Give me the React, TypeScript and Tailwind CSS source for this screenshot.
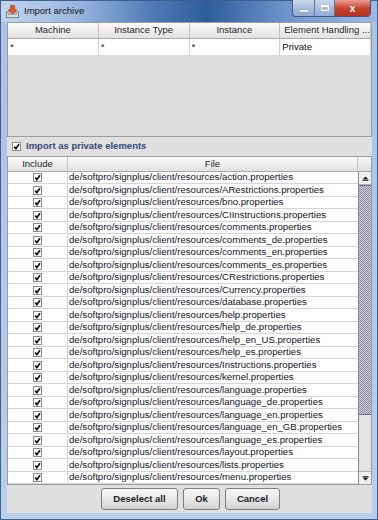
import cn from 'clsx'

const files = [
  'action',
  'ARestrictions',
  'bno',
  'CIInstructions',
  'comments',
  'comments_de',
  'comments_en',
  'comments_es',
  'CRestrictions',
  'Currency',
  'database',
  'help',
  'help_de',
  'help_en_US',
  'help_es',
  'Instructions',
  'kernel',
  'language',
  'language_de',
  'language_en',
  'language_en_GB',
  'language_es',
  'layout',
  'lists',
  'menu',
]

function Check() {
  return (
    <span className="inline-flex h-[9px] w-[9px] items-center justify-center border border-[#8c8c8c] bg-white">
      <svg viewBox="0 0 7 7" className="h-[7px] w-[7px]">
        <path d="M1.2 3.6 L2.9 5.6 L6 1.3" stroke="#141414" strokeWidth="1.7" fill="none" />
      </svg>
    </span>
  )
}

function TitleIcon() {
  return (
    <svg viewBox="0 0 16 16" className="h-[15px] w-[15px]">
      <rect x="1.5" y="8.5" width="13" height="6" fill="#dcdcdc" stroke="#7a7a7a" />
      <rect x="3" y="10" width="10" height="1.5" fill="#9a9a9a" />
      <path d="M6 1.5 H10 V6 H12.5 L8 10.5 L3.5 6 H6 Z" fill="#e8582a" stroke="#a8341a" strokeWidth="0.8" />
    </svg>
  )
}

function Arrow(props: { up?: boolean }) {
  return (
    <svg viewBox="0 0 7 5" className="h-[5px] w-[7px]">
      {props.up ? (
        <path d="M0.5 3.5 L3.5 0.5 L6.5 3.5 Z M0.5 4 H6.5 V4.8 H0.5 Z" fill="#111" />
      ) : (
        <path d="M0.5 1.5 L3.5 4.5 L6.5 1.5 Z M0.5 0.2 H6.5 V1 H0.5 Z" fill="#111" />
      )}
    </svg>
  )
}

const head =
  'flex items-center justify-center border-r border-[#c4c4c4] bg-gradient-to-b from-[#fbfbfb] to-[#e2e2e2] text-[9.5px] text-[#262626]'

export default function App() {
  return (
    <div className="flex h-[520px] w-[378px] flex-col border border-[#3f5f8f] bg-gradient-to-b from-[#a9c2e6] to-[#b9cfec] font-['Liberation_Sans',Arial,sans-serif]">
      <div className="relative flex h-[21px] items-center bg-[linear-gradient(90deg,#c2d5ee_0%,#9ab7e0_20%,#4a76b2_42%,#2f5c9c_55%,#6b92c9_75%,#9fbbe3_100%)] pl-[4px]">
        <TitleIcon />
        <span className="ml-[4px] text-[9.5px] text-[#141414]">Import archive</span>
        <div className="absolute right-[6px] top-[-1px] flex h-[17px] overflow-hidden rounded-b-[4px] border border-t-0 border-[#3d5a87]">
          <div className="flex w-[22px] items-center justify-center border-r border-[#5a76a3] bg-gradient-to-b from-[#c9d8ee] to-[#8ea9d2]">
            <span className="mt-[5px] h-[2px] w-[8px] bg-white shadow-[0_0_1px_#334]" />
          </div>
          <div className="flex w-[20px] items-center justify-center border-r border-[#5a76a3] bg-gradient-to-b from-[#c9d8ee] to-[#8ea9d2]">
            <span className="h-[6px] w-[8px] border-[1.5px] border-t-[2px] border-white" />
          </div>
          <div className="flex w-[35px] items-center justify-center bg-gradient-to-b from-[#e8a08f] via-[#c8432f] to-[#b8321f] text-[10px] font-bold text-white">
            x
          </div>
        </div>
      </div>

      <div className="ml-[6px] mr-[5px] flex flex-1 flex-col bg-[#e0e0e0]">
        <div className="flex h-[115px] flex-col border border-[#9c9c9c] bg-[#dcdcdc]">
          <div className="grid h-[16px] grid-cols-4 border-b border-[#a8a8a8]">
            <div className={head}>Machine</div>
            <div className={head}>Instance Type</div>
            <div className={head}>Instance</div>
            <div className={cn(head, 'justify-start pl-[4px]')}>Element Handling ...</div>
          </div>
          <div className="grid h-[16px] grid-cols-4 bg-white text-[9.6px] text-[#111]">
            <div className="border-r border-[#d2d2d2] pl-[2px] leading-[16px]">*</div>
            <div className="border-r border-[#d2d2d2] pl-[2px] leading-[16px]">*</div>
            <div className="border-r border-[#d2d2d2] pl-[2px] leading-[16px]">*</div>
            <div className="border-r border-[#d2d2d2] pl-[2px] leading-[16px]">Private</div>
          </div>
        </div>

        <div className="flex h-[19px] items-center gap-[5px] pl-[5px]">
          <Check />
          <span className="text-[9.5px] font-bold text-[#34477a]">Import as private elements</span>
        </div>

        <div className="flex h-[329px] flex-col border border-[#9c9c9c] bg-white">
          <div className="flex h-[15px] border-b border-[#a8a8a8]">
            <div className={cn(head, 'w-[60px]')}>Include</div>
            <div className={cn(head, 'flex-1')}>File</div>
            <div className="w-[13px] bg-gradient-to-b from-[#f4f4f4] to-[#e0e0e0]" />
          </div>
          <div className="flex flex-1">
            <div className="flex flex-1 flex-col">
              {files.map((f, i) => (
                <div
                  key={f}
                  className={cn(
                    'flex border-b border-[#d6d6d6] text-[9.6px] text-[#141428]',
                    i % 2 ? 'h-[13px]' : 'h-[12px]',
                  )}
                >
                  <div className="flex w-[60px] items-center justify-center border-r border-[#d6d6d6]">
                    <Check />
                  </div>
                  <div className="flex flex-1 items-center pl-[1px]">
                    de/softpro/signplus/client/resources/{f}.properties
                  </div>
                </div>
              ))}
            </div>
            <div className="flex w-[13px] flex-col border-l border-[#8a8a8a] bg-[#e4e4e4]">
              <div className="flex h-[13px] items-center justify-center border-b border-[#b4b4b4] bg-[#efefef]">
                <Arrow up />
              </div>
              <div className="h-[230px] border-y border-[#707088] bg-[repeating-conic-gradient(#8c8ca6_0_25%,#d0d0dc_0_50%)] bg-[length:2px_2px]" />
              <div className="flex-1" />
              <div className="flex h-[13px] items-center justify-center border-t border-[#b4b4b4] bg-[#efefef]">
                <Arrow />
              </div>
            </div>
          </div>
        </div>

        <div className="flex flex-1 items-center justify-center gap-[5px] pl-[2px]">
          {[
            ['Deselect all', 'w-[77px]'],
            ['Ok', 'w-[37px]'],
            ['Cancel', 'w-[55px]'],
          ].map(([t, w]) => (
            <button
              key={t}
              type="button"
              className={cn(
                'h-[22px] rounded-[3px] border border-[#7e7e7e] bg-gradient-to-b from-[#f6f6f6] via-[#e8e8e8] to-[#d2d2d2] text-[9.5px] font-bold text-[#1c1c1c]',
                w,
              )}
            >
              {t}
            </button>
          ))}
        </div>
      </div>
      <div className="h-[6px]" />
    </div>
  )
}
